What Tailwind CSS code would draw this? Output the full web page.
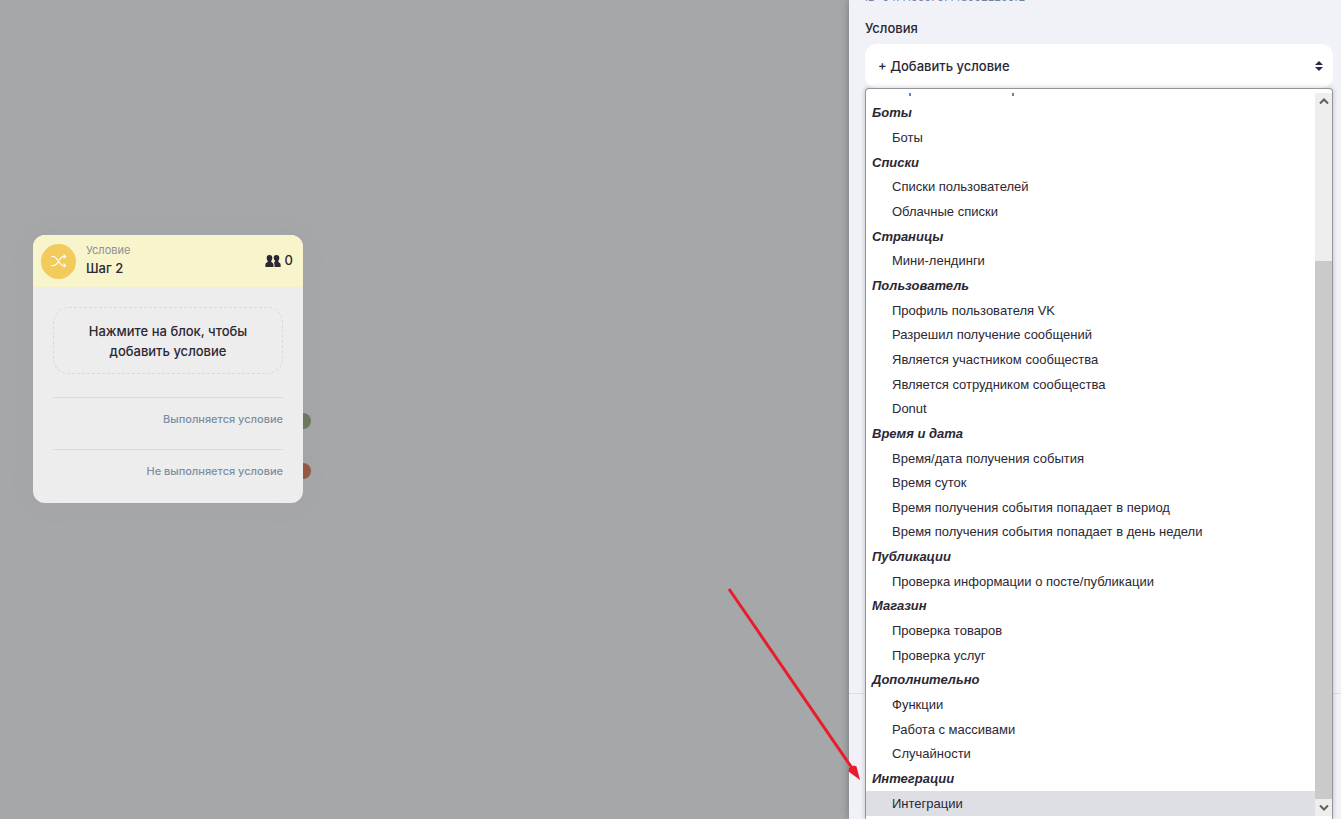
<!DOCTYPE html>
<html lang="ru">
<head>
<meta charset="utf-8">
<title>Условие</title>
<script src="https://cdn.jsdelivr.net/npm/@tailwindcss/browser@4"></script>
</head>
<body class="font-['Inter',sans-serif] text-[13px] text-[#2b2733]">
<div class="relative flex h-screen overflow-hidden bg-[#a6a7a9]">
  <main class="relative min-w-0 flex-1">
    <!-- Flow node -->
    <article class="absolute left-[33px] top-[235px] w-[270px] rounded-xl shadow-[0_0_30px_rgba(100,100,125,0.06)]">
      <span class="absolute -right-2 top-[178px] size-4 rounded-full bg-[#6b775f]"></span>
      <span class="absolute -right-2 top-[228px] size-4 rounded-full bg-[#925842]"></span>
      <div class="relative overflow-hidden rounded-xl bg-[#ededed]">
        <header class="flex h-[52px] items-center bg-[#f8f4cb] px-2">
          <span class="flex size-[35px] items-center justify-center rounded-full bg-[#f2cb5c]">
            <svg class="size-4" viewBox="0 0 16 16" fill="none" stroke="#fff" stroke-width="1.2" stroke-linecap="round" stroke-linejoin="round"><path d="M.7 3.500H2.500C6.500 3.500 8 12.500 12.500 12.500H14.500M.7 12.500H2.500C4.700 12.500 6 11 7 9.300M8.500 6.700C9.500 4.800 10.500 3.500 12.500 3.500H14.500"/><path d="M13 1.700 15.200 3.500 13 5.300ZM13 10.700 15.200 12.500 13 14.300Z" fill="#fff" stroke-width=".5"/></svg>
          </span>
          <div class="ml-[10px] flex-1 pb-[2px]">
            <p class="text-[11px] leading-4 text-[#8c9098]">Условие</p>
            <h2 class="text-[13px] leading-5 font-medium">Шаг 2</h2>
          </div>
          <div class="flex items-center gap-1 pr-[2px] font-medium">
            <svg class="h-3 w-4" viewBox="0 0 16 12" fill="#2b2733"><path d="M4.500 0C6.600 0 7.300 1.300 7.300 3 7.300 4.400 6.700 5.200 6.200 6 5.900 7.400 8.300 7.600 8.500 9.500V12H.4V9.500C.6 7.600 3.100 7.400 2.800 6 2.300 5.200 1.700 4.400 1.700 3 1.700 1.300 2.400 0 4.500 0Z"/><path d="M11.500 0C13.600 0 14.300 1.300 14.300 3 14.300 4.400 13.700 5.200 13.200 6 12.900 7.400 15.400 7.600 15.600 9.500V12H9.500V9.500C9.300 8 8.600 7.500 9.700 6.800 10.100 6.500 10.200 6.200 10 5.700 9.300 4.800 8.700 4.400 8.700 3 8.700 1.300 9.400 0 11.500 0Z"/></svg>
            <span>0</span>
          </div>
        </header>
        <div class="px-5 pt-5 pb-6">
          <div class="rounded-2xl border border-dashed border-[#dadada] px-6 py-3 pt-[13px] text-center leading-5 font-medium">Нажмите на блок, чтобы<br>добавить условие</div>
          <p class="mt-[23px] border-t border-[#dadbdc] pt-[13px] text-right text-[11px] leading-4 font-medium text-[#7c8fa3]">Выполняется условие</p>
          <p class="mt-[22px] border-t border-[#dadbdc] pt-[13px] text-right text-[11px] leading-4 font-medium text-[#7c8fa3]">Не выполняется условие</p>
        </div>
      </div>
    </article>
  </main>

  <aside class="relative flex w-[492px] flex-col bg-[#f1f2f7] shadow-[0_0_8px_rgba(0,0,0,0.3)]">
    <div class="absolute inset-x-0 top-[693px] border-t border-[#dcdee3]"></div>
    <div class="relative flex min-h-0 flex-1 flex-col pl-4 pr-2">
      <p class="-mt-3 h-[18px] text-[11px] leading-[18px] text-[#7083a6]">ID: 647f1655767f4895222e6f2</p>
      <label for="cond" class="mt-3 leading-5 font-medium">Условия</label>
      <div class="relative mt-[6px]">
        <select id="cond" class="h-11 w-full appearance-none rounded-xl bg-white px-[13px] pt-px font-medium outline-none"><option>+ Добавить условие</option></select>
        <svg class="pointer-events-none absolute right-[10px] top-[17px] h-[10px] w-2" viewBox="0 0 8 10" fill="#2b2850"><path d="M4 0 8 4H0ZM0 6H8L4 10Z"/></svg>
      </div>
      <div class="relative flex min-h-0 flex-1 rounded-t-[4px] border border-b-0 border-[#939599] bg-white pt-1 shadow-[0_0_5px_rgba(0,0,0,0.22)] font-['Liberation_Sans',sans-serif]">
        <div role="listbox" aria-label="Условия" class="flex min-w-0 flex-1 flex-col pb-[3px] leading-4">
          <div class="flex h-2 items-end overflow-hidden pl-[26px]"><span class="h-5">Переменные из вопроса</span></div>
          <div role="group" class="contents">
            <p class="flex flex-1 items-center pl-[6px] font-bold italic">Боты</p>
            <button role="option" class="flex flex-1 items-center pl-[26px]">Боты</button>
          </div>
          <div role="group" class="contents">
            <p class="flex flex-1 items-center pl-[6px] font-bold italic">Списки</p>
            <button role="option" class="flex flex-1 items-center pl-[26px]">Списки пользователей</button>
            <button role="option" class="flex flex-1 items-center pl-[26px]">Облачные списки</button>
          </div>
          <div role="group" class="contents">
            <p class="flex flex-1 items-center pl-[6px] font-bold italic">Страницы</p>
            <button role="option" class="flex flex-1 items-center pl-[26px]">Мини-лендинги</button>
          </div>
          <div role="group" class="contents">
            <p class="flex flex-1 items-center pl-[6px] font-bold italic">Пользователь</p>
            <button role="option" class="flex flex-1 items-center pl-[26px]">Профиль пользователя VK</button>
            <button role="option" class="flex flex-1 items-center pl-[26px]">Разрешил получение сообщений</button>
            <button role="option" class="flex flex-1 items-center pl-[26px]">Является участником сообщества</button>
            <button role="option" class="flex flex-1 items-center pl-[26px]">Является сотрудником сообщества</button>
            <button role="option" class="flex flex-1 items-center pl-[26px]">Donut</button>
          </div>
          <div role="group" class="contents">
            <p class="flex flex-1 items-center pl-[6px] font-bold italic">Время и дата</p>
            <button role="option" class="flex flex-1 items-center pl-[26px]">Время/дата получения события</button>
            <button role="option" class="flex flex-1 items-center pl-[26px]">Время суток</button>
            <button role="option" class="flex flex-1 items-center pl-[26px]">Время получения события попадает в период</button>
            <button role="option" class="flex flex-1 items-center pl-[26px]">Время получения события попадает в день недели</button>
          </div>
          <div role="group" class="contents">
            <p class="flex flex-1 items-center pl-[6px] font-bold italic">Публикации</p>
            <button role="option" class="flex flex-1 items-center pl-[26px]">Проверка информации о посте/публикации</button>
          </div>
          <div role="group" class="contents">
            <p class="flex flex-1 items-center pl-[6px] font-bold italic">Магазин</p>
            <button role="option" class="flex flex-1 items-center pl-[26px]">Проверка товаров</button>
            <button role="option" class="flex flex-1 items-center pl-[26px]">Проверка услуг</button>
          </div>
          <div role="group" class="contents">
            <p class="flex flex-1 items-center pl-[6px] font-bold italic">Дополнительно</p>
            <button role="option" class="flex flex-1 items-center pl-[26px]">Функции</button>
            <button role="option" class="flex flex-1 items-center pl-[26px]">Работа с массивами</button>
            <button role="option" class="flex flex-1 items-center pl-[26px]">Случайности</button>
          </div>
          <div role="group" class="contents">
            <p class="flex flex-1 items-center pl-[6px] font-bold italic">Интеграции</p>
            <button role="option" aria-selected="true" class="flex flex-1 items-center bg-[#dedfe4] pl-[26px]">Интеграции</button>
          </div>
        </div>
        <div class="mb-[3px] flex w-[17px] flex-col bg-[#eeeeee]">
          <button aria-label="Вверх" class="flex h-4 items-center justify-center"><svg class="h-2 w-[10px]" viewBox="0 0 10 8" fill="none" stroke="#5c6358" stroke-width="2"><path d="M1 6.500 5 2.500 9 6.500"/></svg></button>
          <div class="flex min-h-0 flex-1 flex-col pt-[152px]"><div class="flex-1 bg-[#cacaca]"></div></div>
          <button aria-label="Вниз" class="flex h-[17px] items-center justify-center"><svg class="h-2 w-[10px]" viewBox="0 0 10 8" fill="none" stroke="#5c6358" stroke-width="2"><path d="M1 1.500 5 5.500 9 1.500"/></svg></button>
        </div>
      </div>
    </div>
  </aside>

  <!-- Pointer arrow laid over the page -->
  <svg class="pointer-events-none absolute left-[720px] top-[580px] h-[210px] w-[150px]" viewBox="0 0 150 210"><path d="M9 9 132 188" stroke="#e81c2c" stroke-width="3" fill="none"/><path d="M140 200 128.500 191.500 129 187.500 134 185.500 136.500 186.500Z" fill="#e81c2c"/></svg>
</div>
</body>
</html>
